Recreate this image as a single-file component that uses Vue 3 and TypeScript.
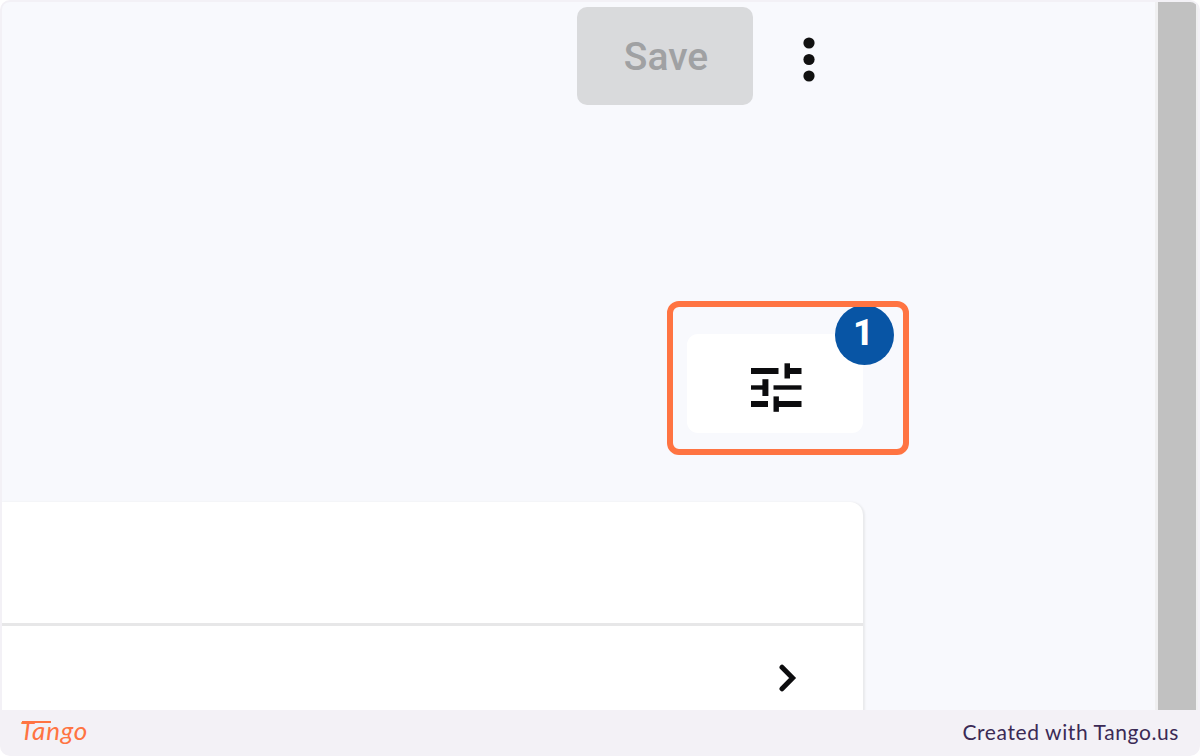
<template>
  <div class="frame">
    <div class="screen">
      <main class="content">
        <header class="toolbar">
          <button class="save-button" disabled>Save</button>
          <button class="more-button" aria-label="More">
            <svg width="14" height="46" viewBox="0 0 14 46">
              <circle v-for="cy in dots" :key="cy" cx="7" :cy="cy" r="5.6" fill="#111" />
            </svg>
          </button>
        </header>

        <div class="filter-row">
          <button class="filter-button" aria-label="Filters">
            <svg width="52" height="50" viewBox="0 0 52 50" fill="#0c0c0e">
              <rect
                v-for="(bar, i) in tuneBars"
                :key="i"
                :x="bar.x"
                :y="bar.y"
                :width="bar.w"
                :height="bar.h"
              />
            </svg>
            <span class="badge">{{ filterCount }}</span>
            <span class="highlight" />
          </button>
        </div>

        <section class="card">
          <div class="card-header" />
          <div class="card-row">
            <svg width="18" height="30" viewBox="0 0 18 30">
              <path
                d="M3 4.2 L13.6 15 L3 25.8"
                fill="none"
                stroke="#0c0c0e"
                stroke-width="5"
                stroke-linecap="round"
              />
            </svg>
          </div>
        </section>
      </main>
      <div class="scrollbar">
        <div class="scrollbar-thumb" />
      </div>
    </div>

    <footer class="footer">
      <span class="brand">Tango</span>
      <span class="credit">Created with Tango.us</span>
    </footer>
  </div>
</template>

<script setup lang="ts">
import { ref } from 'vue'

interface Bar {
  x: number
  y: number
  w: number
  h: number
}

const filterCount = ref(1)

const dots = [7, 23.5, 40]

/** Slider icon, row by row */
const tuneBars: Bar[] = [
  { x: 1, y: 6, w: 27.5, h: 6 },
  { x: 34.5, y: 1.3, w: 5.5, h: 15.2 },
  { x: 39, y: 6, w: 12.5, h: 6 },
  { x: 1, y: 23.3, w: 12, h: 4.4 },
  { x: 12.4, y: 17.2, w: 6, h: 16.8 },
  { x: 23.5, y: 23.3, w: 28, h: 4.4 },
  { x: 1, y: 39, w: 17, h: 6 },
  { x: 23.5, y: 34.4, w: 5.4, h: 15.4 },
  { x: 28, y: 39, w: 23.5, h: 6 }
]
</script>

<style>
body {
  margin: 0;
  background: #fff;
}
</style>

<style scoped>
.frame {
  display: flex;
  flex-direction: column;
  box-sizing: border-box;
  width: 1200px;
  height: 756px;
  padding: 2px 2px 0;
  border-radius: 10px;
  background: #f3f1f6;
  overflow: hidden;
  font-family: Roboto, "Liberation Sans", sans-serif;
}

.screen {
  display: flex;
  height: 708px;
  border-radius: 8px 8px 0 0;
  background: #f8f9fd;
  overflow: hidden;
}

.content {
  display: flex;
  flex-direction: column;
  width: 1153px;
}

button {
  display: flex;
  align-items: center;
  justify-content: center;
  padding: 0;
  border: none;
  font-family: inherit;
}

.toolbar {
  display: flex;
  gap: 12px;
  height: 98px;
  padding: 5px 0 0 575px;
}

.save-button {
  width: 176px;
  height: 98px;
  padding: 1px 0 0 2px;
  border-radius: 10px;
  background: #d9dadc;
  color: #a0a1a3;
  font-size: 39px;
  font-weight: 500;
}

.more-button {
  width: 88px;
  height: 98px;
  padding-top: 6px;
  background: transparent;
}

.filter-row {
  display: flex;
  padding: 229px 0 0 685px;
}

.filter-button {
  position: relative;
  width: 176px;
  height: 99px;
  padding-top: 6px;
  padding-left: 1px;
  border-radius: 11px;
  background: #fff;
}

.badge {
  position: absolute;
  top: -29px;
  right: -31px;
  box-sizing: border-box;
  width: 59px;
  height: 60px;
  padding-right: 2px;
  border-radius: 50%;
  background: #0855a5;
  color: #fff;
  font-size: 36px;
  font-weight: 800;
  line-height: 56px;
  text-align: center;
}

.highlight {
  position: absolute;
  top: -33px;
  left: -20px;
  box-sizing: border-box;
  width: 242px;
  height: 154px;
  border: 6px solid #ff7442;
  border-radius: 12px;
}

.card {
  flex: 1;
  display: flex;
  flex-direction: column;
  width: 861px;
  margin-top: 69px;
  border-radius: 0 13px 0 0;
  background: #fff;
  box-shadow: 1px 1px 2px 1px #e9eaed;
}

.card-header {
  height: 121px;
  border-bottom: 3px solid #e7e7e8;
}

.card-row {
  display: flex;
  justify-content: flex-end;
  padding: 37px 66px 0 0;
}

.scrollbar {
  box-sizing: border-box;
  flex: 1;
  padding: 0 2px 0 3px;
  background: #f0f0f1;
}

.scrollbar-thumb {
  height: 100%;
  background: #c1c1c1;
}

.footer {
  display: flex;
  align-items: center;
  justify-content: space-between;
  box-sizing: border-box;
  height: 46px;
  padding: 0 19px 3px 18px;
}

.brand {
  position: relative;
  padding-bottom: 4px;
  color: #ff7442;
  font-family: Lato, sans-serif;
  font-size: 26px;
  font-style: italic;
  font-weight: 400;
  line-height: 30px;
  letter-spacing: 0.8px;
}

/* long crossbar running over the first letters */
.brand::before {
  content: "";
  position: absolute;
  top: 6px;
  left: 2px;
  width: 29px;
  height: 2px;
  background: #ff7442;
}

.credit {
  color: #3b2a55;
  font-family: Lato, sans-serif;
  font-size: 21px;
  letter-spacing: 0.6px;
}
</style>
